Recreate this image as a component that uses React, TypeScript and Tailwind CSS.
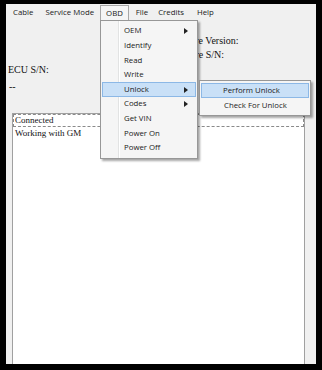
import React from 'react';

const ui = "font-['Open_Sans',sans-serif]";
const serif = "font-['Liberation_Serif',serif]";

const Arrow: React.FC = () => (
  <svg width="4" height="6" viewBox="0 0 4 6" className="absolute right-[7px] top-1/2 -translate-y-1/2">
    <path d="M0 0 L4 3 L0 6 Z" fill="#222" />
  </svg>
);

const obdItems = [
  { label: 'OEM', sub: true },
  { label: 'Identify' },
  { label: 'Read' },
  { label: 'Write' },
  { label: 'Unlock', sub: true, active: true },
  { label: 'Codes', sub: true },
  { label: 'Get VIN' },
  { label: 'Power On' },
  { label: 'Power Off' },
];

const App: React.FC = () => {
  return (
    <div className="w-[322px] h-[370px] bg-black pt-[4px] pl-[6px] overflow-hidden">
      <div className="relative w-[310px] h-[360px] bg-[#f0f0f0] overflow-hidden flex flex-col">
        {/* menu bar */}
        <div className={`${ui} h-[17px] shrink-0 flex items-center text-[7.8px] text-[#1a1a1a] relative`}>
          <span className="ml-[7px]">Cable</span>
          <span className="ml-[12px]">Service Mode</span>
          <span className="ml-[6px] h-[16px] mt-[1px] px-[5px] flex items-center border border-b-0 border-[#a7a7a7] bg-[#f5f5f5]">OBD</span>
          <span className="ml-[7px]">File</span>
          <span className="ml-[10px]">Credits</span>
          <span className="ml-[13px]">Help</span>
        </div>

        {/* info area */}
        <div className={`${serif} text-[10px] leading-[12px] text-[#111] h-[92px] shrink-0`}>
          <div className="flex">
            <div className="pt-[43px] pl-[2px] flex flex-col gap-[5px]">
              <span>ECU S/N:</span>
              <span className="pl-[1px]">--</span>
            </div>
            <div className="pt-[14px] pl-[118px] flex flex-col gap-[2px]">
              <span>Software Version:</span>
              <span className="-ml-[3px]">Hardware S/N:</span>
            </div>
          </div>
        </div>

        {/* output box */}
        <div className={`${serif} ml-[6px] w-[293px] flex-1 bg-white border-l border-r border-t border-[#a0a0a0] text-[9px] text-[#111] leading-[11px]`}>
          <div className="border border-dashed border-[#8a8a8a] px-[1px]">Connected</div>
          <div className="px-[2px] pt-[1px]">Working with GM</div>
        </div>

        {/* OBD dropdown */}
        <div className={`${ui} absolute left-[94px] top-[16px] w-[98px] bg-[#f5f5f5] border border-[#979797] shadow-[2px_2px_2px_rgba(0,0,0,0.35)] py-[3px] text-[7.8px] text-[#1a1a1a]`}>
          <div className="absolute left-[17px] top-0 bottom-0 w-px bg-[#e2e3e3]" />
          <div className="absolute left-[18px] top-0 bottom-0 w-px bg-white" />
          {obdItems.map(it => (
            <div
              key={it.label}
              className={`relative h-[14.6px] flex items-center pl-[21px] mx-[1px] ${it.active ? 'bg-[#c9e0f7] border border-[#8cb8e6]' : 'border border-transparent'}`}
            >
              {it.label}
              {it.sub && <Arrow />}
            </div>
          ))}
        </div>

        {/* Unlock submenu */}
        <div className={`${ui} absolute left-[193px] top-[76px] w-[112px] bg-[#f5f5f5] border border-[#979797] shadow-[2px_2px_2px_rgba(0,0,0,0.35)] py-[2px] text-[7.8px] text-[#1a1a1a]`}>
          <div className="h-[15px] mx-[1px] flex items-center pl-[21px] bg-[#c9e0f7] border border-[#8cb8e6]">Perform Unlock</div>
          <div className="h-[15px] mx-[1px] flex items-center pl-[22px] border border-transparent">Check For Unlock</div>
        </div>
      </div>
    </div>
  );
};

export default App;
